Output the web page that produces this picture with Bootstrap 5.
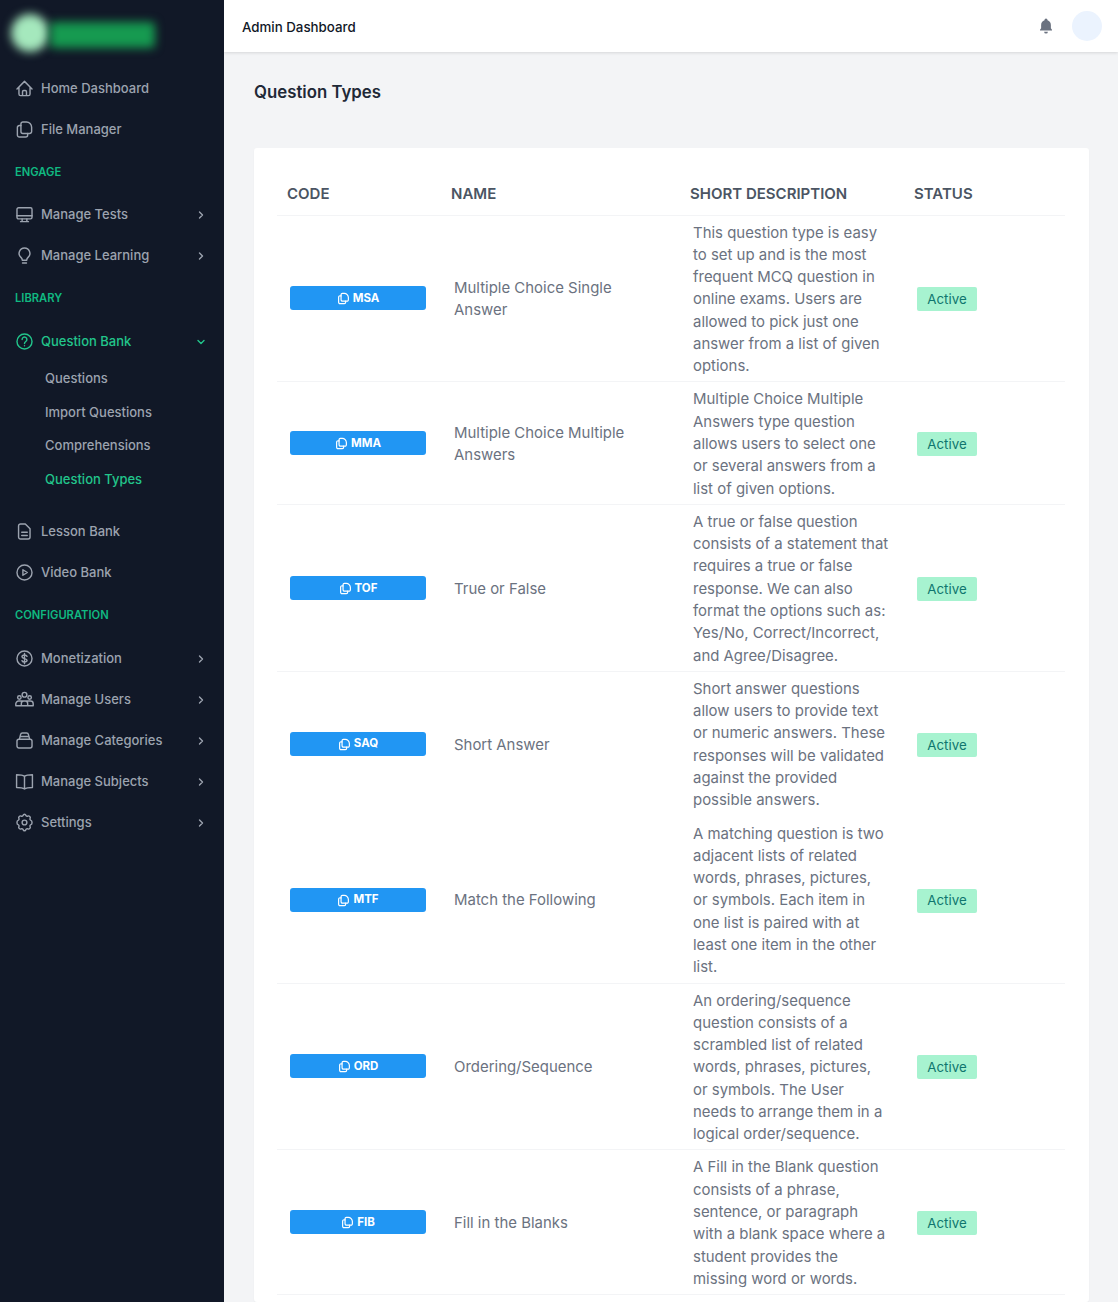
<!DOCTYPE html>
<html lang="en">
<head>
<meta charset="utf-8">
<title>Question Types</title>
<link href="https://cdn.jsdelivr.net/npm/bootstrap@5.3.0/dist/css/bootstrap.min.css" rel="stylesheet">
<style>
html,body{height:100%}
body{font-family:Inter,"Liberation Sans",sans-serif;background:#f3f4f6;overflow:hidden}
.side-rail{width:224px;flex:0 0 224px;background:#111827;height:100vh;overflow:hidden}
.logo-zone{height:68px;position:relative}
.logo-dot{position:absolute;left:11px;top:14px;width:38px;height:38px;border-radius:50%;background:#a5e8bd;filter:blur(5px)}
.logo-word{position:absolute;left:50px;top:22px;width:105px;height:26px;background:#169a50;filter:blur(5px);border-radius:4px}
.menu-row{height:41px;padding:0 16px;gap:7px;color:#9ca3af;font-size:13px;font-weight:500;text-decoration:none}
.menu-row svg.glyph{width:19px;height:19px;flex:none;margin-left:-1px}
.menu-row .chev{width:10px;height:10px;margin-left:auto;margin-right:2px;flex:none}
.menu-row.on{color:#22c58b}
.menu-head{height:44.5px;padding-left:15px;color:#10b981;font-size:11.2px;font-weight:600}
.menu-head.first{height:44px}
.menu-head.second{height:45px}
.menu-head.late{margin-top:.5px}
.sub-list{padding-bottom:15px}
.sub-row{height:33.5px;padding-left:45px;color:#9ca3af;font-size:13px;font-weight:500;text-decoration:none}
.sub-row.on{color:#22c58b}
.top-strip{height:52px;flex:none;background:#fff;box-shadow:0 1px 3px rgba(0,0,0,.12);padding:0 16px 0 18px;position:relative}
.top-name{font-size:13.3px;font-weight:500;color:#111827;padding-top:3px}
.bell-mark{width:18px;height:18px;color:#6b7280;margin-right:17px}
.face-dot{width:30px;height:30px;border-radius:50%;background:#ebf3fe}
.page-pad{padding:30px 29px 0 30px;min-height:0}
.page-name{font-size:16.8px;font-weight:600;color:#1f2937;line-height:21px;margin:0 0 45px}
.sheet{border:0;border-radius:3px;padding:23px 24px 0 23px;box-shadow:0 1px 2px rgba(0,0,0,.04)}
.q-grid{table-layout:fixed;margin:0;width:788px;--bs-table-border-color:#f3f4f6}
.q-grid th{height:44px;padding:2px 0 0 10px;vertical-align:middle;color:#4b5563;font-size:15px;font-weight:600}
.q-grid td{padding:6px 15px 4px 13px;font-size:14.95px;line-height:22.28px;color:#6b7280}
.q-grid tr.no-rule td{border-bottom-color:transparent}
.c-code{width:164px}.c-name{width:239px}.c-desc{width:224px}
.code-pill{width:136px;height:24px;background:#2196f3;color:#fff;border-radius:3px;font-size:11.5px;font-weight:700;padding:1px 0 0;gap:3px;line-height:1;border:0;margin-bottom:2px}
.code-pill svg{width:13px;height:13px}
.state-pill{background:#a7f3d0;color:#0f766e;width:60px;height:24px;font-size:13.3px;font-weight:400;border-radius:2px;padding:1px 0 0;line-height:1}
.menu-row svg,.code-pill svg{fill:none;stroke:currentColor;stroke-width:1.800;stroke-linecap:round;stroke-linejoin:round}
.menu-row svg.chev{stroke-width:1.400}
.code-pill svg{stroke-width:2.200}
</style>
</head>
<body>
<svg width="0" height="0" class="position-absolute" aria-hidden="true">
<defs>
<symbol id="i-home" viewBox="0 0 24 24"><path d="M2.500 12.500 12 3l9.500 9.500M5 10v9a2 2 0 0 0 2 2h10a2 2 0 0 0 2-2v-9M9.500 21v-5a1.500 1.500 0 0 1 1.500-1.500h2a1.500 1.500 0 0 1 1.500 1.500v5"/></symbol>
<symbol id="i-file" viewBox="0 0 24 24"><path d="M10 2.500h4.500c3.500 0 6.500 3 6.500 6.500v5.500a2.500 2.500 0 0 1-2.500 2.500H10a2.500 2.500 0 0 1-2.500-2.500V5A2.500 2.500 0 0 1 10 2.500z"/><path d="M7.500 7H5.500A2.500 2.500 0 0 0 3 9.500V19a2.500 2.500 0 0 0 2.500 2.500h8A2.500 2.500 0 0 0 16 19v-2"/></symbol>
<symbol id="i-desk" viewBox="0 0 24 24"><rect x="2.500" y="3.500" width="19" height="14" rx="2"/><path d="M2.500 13.500h19M9 17.500V21M15 17.500V21M7 21h10"/></symbol>
<symbol id="i-bulb" viewBox="0 0 24 24"><path d="M12 2.500a6.800 6.800 0 0 0-4.500 11.900c1.100 1 1.700 2.100 1.700 3.600h5.600c0-1.500.6-2.600 1.700-3.600A6.800 6.800 0 0 0 12 2.500zM9.500 21.500h5"/></symbol>
<symbol id="i-ask" viewBox="0 0 24 24"><circle cx="12" cy="12" r="9.500"/><path d="M9 9.500a3 3 0 1 1 4.600 2.500c-1 .7-1.600 1.300-1.600 2.500M12 17.300v.2"/></symbol>
<symbol id="i-doc" viewBox="0 0 24 24"><path d="M7 2.500h6l6 6V19a2.500 2.500 0 0 1-2.500 2.500h-9.500A2.500 2.500 0 0 1 4.500 19V5A2.500 2.500 0 0 1 7 2.500zM8.500 13h7M8.500 17h7"/></symbol>
<symbol id="i-play" viewBox="0 0 24 24"><circle cx="12" cy="12" r="9.500"/><path d="M10 8.500l5.500 3.500-5.500 3.500z"/></symbol>
<symbol id="i-coin" viewBox="0 0 24 24"><circle cx="12" cy="12" r="9.500"/><path d="M15.200 9.300c-.5-1.100-1.700-1.800-3.200-1.800-1.900 0-3.200 1-3.200 2.300 0 3.100 6.400 1.500 6.400 4.500 0 1.300-1.300 2.200-3.200 2.200-1.500 0-2.700-.7-3.200-1.800M12 5.500v13"/></symbol>
<symbol id="i-team" viewBox="0 0 24 24"><circle cx="12" cy="6" r="3"/><circle cx="5.500" cy="9.500" r="2.200"/><circle cx="18.500" cy="9.500" r="2.200"/><path d="M1 20v-2.500A3.500 3.500 0 0 1 4.500 14h15a3.500 3.500 0 0 1 3.500 3.500V20zM8 20v-3a3 3 0 0 1 3-3h2a3 3 0 0 1 3 3v3"/></symbol>
<symbol id="i-stack" viewBox="0 0 24 24"><rect x="2.500" y="10.500" width="19" height="11" rx="2.500"/><path d="M5.500 10.500 7 4.500a2.500 2.500 0 0 1 2.400-2h5.200a2.500 2.500 0 0 1 2.400 2l1.500 6M6.500 7h11"/></symbol>
<symbol id="i-book" viewBox="0 0 24 24"><path d="M12 5.500C10 4 7 3.500 2 3.500v16c5 0 8 .5 10 2 2-1.500 5-2 10-2v-16c-5 0-8 .5-10 2zM12 5.500v16"/></symbol>
<symbol id="i-gear" viewBox="0 0 24 24"><path d="M10.325 2.817c.426-1.756 2.924-1.756 3.350 0a1.724 1.724 0 0 0 2.573 1.066c1.543-.94 3.810 1.326 2.870 2.870a1.724 1.724 0 0 0 1.065 2.572c1.756.426 1.756 4.924 0 5.350a1.724 1.724 0 0 0-1.066 2.573c.94 1.543-1.326 3.810-2.870 2.870a1.724 1.724 0 0 0-2.572 1.065c-.426 1.756-2.924 1.756-3.350 0a1.724 1.724 0 0 0-2.573-1.066c-1.543.94-3.810-1.326-2.870-2.870a1.724 1.724 0 0 0-1.065-2.572c-1.756-.426-1.756-4.924 0-5.350a1.724 1.724 0 0 0 1.066-2.573c-.94-1.543 1.326-3.810 2.870-2.870.996.608 2.296.07 2.572-1.065z"/><circle cx="12" cy="12" r="3"/></symbol>
<symbol id="i-right" viewBox="0 0 10 10"><path d="M3.500 2 6.500 5l-3 3"/></symbol>
<symbol id="i-down" viewBox="0 0 10 10"><path d="M2 3.500 5 6.500l3-3"/></symbol>
<symbol id="i-copy" viewBox="0 0 24 24"><path d="M10 2.500h3.500c4 0 7.500 3.500 7.500 7.500v4.500a2.500 2.500 0 0 1-2.500 2.500H10a2.500 2.500 0 0 1-2.500-2.500V5A2.500 2.500 0 0 1 10 2.500z"/><path d="M7.500 7H5.500A2.500 2.500 0 0 0 3 9.500V19a2.500 2.500 0 0 0 2.500 2.500h8A2.500 2.500 0 0 0 16 19v-2"/></symbol>
</defs>
</svg>
<div class="d-flex vh-100 overflow-hidden">
<aside class="side-rail d-flex flex-column">
  <div class="logo-zone"><div class="logo-dot"></div><div class="logo-word"></div></div>
  <a class="menu-row d-flex align-items-center" href="#"><svg class="glyph"><use href="#i-home"/></svg>Home Dashboard</a>
  <a class="menu-row d-flex align-items-center" href="#"><svg class="glyph"><use href="#i-file"/></svg>File Manager</a>
  <div class="menu-head first d-flex align-items-center">ENGAGE</div>
  <a class="menu-row d-flex align-items-center" href="#"><svg class="glyph"><use href="#i-desk"/></svg>Manage Tests<svg class="chev"><use href="#i-right"/></svg></a>
  <a class="menu-row d-flex align-items-center" href="#"><svg class="glyph"><use href="#i-bulb"/></svg>Manage Learning<svg class="chev"><use href="#i-right"/></svg></a>
  <div class="menu-head second d-flex align-items-center">LIBRARY</div>
  <a class="menu-row on d-flex align-items-center" href="#"><svg class="glyph"><use href="#i-ask"/></svg>Question Bank<svg class="chev"><use href="#i-down"/></svg></a>
  <div class="sub-list d-flex flex-column">
    <a class="sub-row d-flex align-items-center" href="#">Questions</a>
    <a class="sub-row d-flex align-items-center" href="#">Import Questions</a>
    <a class="sub-row d-flex align-items-center" href="#">Comprehensions</a>
    <a class="sub-row on d-flex align-items-center" href="#">Question Types</a>
  </div>
  <a class="menu-row d-flex align-items-center" href="#"><svg class="glyph"><use href="#i-doc"/></svg>Lesson Bank</a>
  <a class="menu-row d-flex align-items-center" href="#"><svg class="glyph"><use href="#i-play"/></svg>Video Bank</a>
  <div class="menu-head late d-flex align-items-center">CONFIGURATION</div>
  <a class="menu-row d-flex align-items-center" href="#"><svg class="glyph"><use href="#i-coin"/></svg>Monetization<svg class="chev"><use href="#i-right"/></svg></a>
  <a class="menu-row d-flex align-items-center" href="#"><svg class="glyph"><use href="#i-team"/></svg>Manage Users<svg class="chev"><use href="#i-right"/></svg></a>
  <a class="menu-row d-flex align-items-center" href="#"><svg class="glyph"><use href="#i-stack"/></svg>Manage Categories<svg class="chev"><use href="#i-right"/></svg></a>
  <a class="menu-row d-flex align-items-center" href="#"><svg class="glyph"><use href="#i-book"/></svg>Manage Subjects<svg class="chev"><use href="#i-right"/></svg></a>
  <a class="menu-row d-flex align-items-center" href="#"><svg class="glyph"><use href="#i-gear"/></svg>Settings<svg class="chev"><use href="#i-right"/></svg></a>
</aside>
<div class="flex-grow-1 d-flex flex-column overflow-hidden">
  <header class="top-strip d-flex align-items-center justify-content-between">
    <div class="top-name">Admin Dashboard</div>
    <div class="d-flex align-items-center">
      <svg class="bell-mark" viewBox="0 0 24 24" fill="currentColor"><path d="M12 2a2 2 0 0 0-2 2v.3C7.200 5.100 5.500 7.600 5.500 10.500V15L4 17v1h16v-1l-1.500-2v-4.500c0-2.900-1.700-5.400-4.500-6.200V4a2 2 0 0 0-2-2zM9.500 19.500a2.500 2.500 0 0 0 5 0z"/></svg>
      <div class="face-dot"></div>
    </div>
  </header>
  <main class="page-pad flex-grow-1 d-flex flex-column">
    <h1 class="page-name">Question Types</h1>
    <div class="card sheet flex-grow-1">
      <table class="table q-grid">
        <colgroup><col class="c-code"><col class="c-name"><col class="c-desc"><col></colgroup>
        <thead><tr><th>CODE</th><th>NAME</th><th>SHORT DESCRIPTION</th><th>STATUS</th></tr></thead>
        <tbody class="align-middle">
          <tr><td><span class="btn code-pill d-inline-flex align-items-center justify-content-center"><svg><use href="#i-copy"/></svg>MSA</span></td><td>Multiple Choice Single Answer</td><td>This question type is easy to set up and is the most frequent MCQ question in online exams. Users are allowed to pick just one answer from a list of given options.</td><td><span class="badge state-pill d-inline-flex align-items-center justify-content-center">Active</span></td></tr>
          <tr><td><span class="btn code-pill d-inline-flex align-items-center justify-content-center"><svg><use href="#i-copy"/></svg>MMA</span></td><td>Multiple Choice Multiple Answers</td><td>Multiple Choice Multiple Answers type question allows users to select one or several answers from a list of given options.</td><td><span class="badge state-pill d-inline-flex align-items-center justify-content-center">Active</span></td></tr>
          <tr><td><span class="btn code-pill d-inline-flex align-items-center justify-content-center"><svg><use href="#i-copy"/></svg>TOF</span></td><td>True or False</td><td>A true or false question consists of a statement that requires a true or false response. We can also format the options such as: Yes/No, Correct/Incorrect, and Agree/Disagree.</td><td><span class="badge state-pill d-inline-flex align-items-center justify-content-center">Active</span></td></tr>
          <tr class="no-rule"><td><span class="btn code-pill d-inline-flex align-items-center justify-content-center"><svg><use href="#i-copy"/></svg>SAQ</span></td><td>Short Answer</td><td>Short answer questions allow users to provide text or numeric answers. These responses will be validated against the provided possible answers.</td><td><span class="badge state-pill d-inline-flex align-items-center justify-content-center">Active</span></td></tr>
          <tr><td><span class="btn code-pill d-inline-flex align-items-center justify-content-center"><svg><use href="#i-copy"/></svg>MTF</span></td><td>Match the Following</td><td>A matching question is two adjacent lists of related words, phrases, pictures, or symbols. Each item in one list is paired with at least one item in the other list.</td><td><span class="badge state-pill d-inline-flex align-items-center justify-content-center">Active</span></td></tr>
          <tr><td><span class="btn code-pill d-inline-flex align-items-center justify-content-center"><svg><use href="#i-copy"/></svg>ORD</span></td><td>Ordering/Sequence</td><td>An ordering/sequence question consists of a scrambled list of related words, phrases, pictures, or symbols. The User needs to arrange them in a logical order/sequence.</td><td><span class="badge state-pill d-inline-flex align-items-center justify-content-center">Active</span></td></tr>
          <tr><td><span class="btn code-pill d-inline-flex align-items-center justify-content-center"><svg><use href="#i-copy"/></svg>FIB</span></td><td>Fill in the Blanks</td><td>A Fill in the Blank question consists of a phrase, sentence, or paragraph with a blank space where a student provides the missing word or words.</td><td><span class="badge state-pill d-inline-flex align-items-center justify-content-center">Active</span></td></tr>
        </tbody>
      </table>
    </div>
  </main>
</div>
</div>
<script src="https://cdn.jsdelivr.net/npm/bootstrap@5.3.0/dist/js/bootstrap.bundle.min.js"></script>
</body>
</html>
